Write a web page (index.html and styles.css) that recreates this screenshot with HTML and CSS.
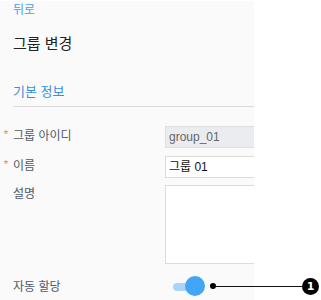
FILE: index.html
```html
<!DOCTYPE html>
<html lang="ko">
<head>
<meta charset="utf-8">
<link rel="stylesheet" href="styles.css">
</head>
<body>
<div class="panel">
  <a class="back">뒤로</a>
  <h1 class="title">그룹 변경</h1>
  <h2 class="section">기본 정보</h2>
  <div class="form">
    <div class="row">
      <label class="label req">그룹 아이디</label>
      <div class="input readonly">group_01</div>
    </div>
    <div class="row">
      <label class="label req">이름</label>
      <div class="input">그룹 01</div>
    </div>
    <div class="row row-area">
      <label class="label">설명</label>
      <div class="textarea"></div>
    </div>
    <div class="row row-switch">
      <label class="label">자동 할당</label>
      <div class="switch"><span class="track"></span><span class="thumb"></span></div>
    </div>
  </div>
</div>
<div class="callout">
  <span class="dot"></span>
  <span class="line"></span>
  <span class="badge">1</span>
</div>
</body>
</html>
```
FILE: styles.css
```css
html, body {
  margin: 0;
  padding: 0;
  background: #fff;
}
body {
  font-family: "Noto Sans CJK KR", "Liberation Sans", sans-serif;
  position: relative;
  width: 321px;
  height: 300px;
  overflow: hidden;
}
.panel {
  box-sizing: border-box;
  width: 254px;
  height: 299px;
  margin-top: 1px;
  padding-left: 13px;
  background: #fafafa;
  overflow: hidden;
}
.back {
  display: block;
  font-size: 12px;
  line-height: 16px;
  color: #4a9ff0;
}
.title {
  margin: 16px 0 0;
  font-size: 15px;
  font-weight: normal;
  line-height: 20px;
  color: #222;
}
.section {
  margin: 29px 0 0;
  padding-bottom: 6px;
  font-size: 13px;
  font-weight: normal;
  line-height: 18px;
  color: #3b8de0;
  border-bottom: 1px solid #dadada;
}
.form {
  display: flex;
  flex-direction: column;
  margin-top: 19px;
}
.row {
  display: flex;
  align-items: flex-start;
}
.row + .row {
  margin-top: 8px;
}
.row-area {
  margin-top: 7px !important;
}
.row-switch {
  margin-top: 12px !important;
  align-items: center;
}
.label {
  position: relative;
  flex: 0 0 152px;
  padding-top: 1px;
  font-size: 12px;
  line-height: 16px;
  color: #4f5868;
}
.row-area .label {
  padding-top: 0;
}
.row-switch .label {
  padding-top: 0;
}
.req::before {
  content: "*";
  position: absolute;
  left: -10px;
  top: 1px;
  color: #f0a23c;
  font-size: 13px;
}
.input {
  box-sizing: border-box;
  flex: 0 0 160px;
  height: 22px;
  padding: 0 3px;
  border: 1px solid #dcdcdc;
  background: #fff;
  font-family: "Liberation Sans", "Noto Sans CJK KR", sans-serif;
  font-size: 12px;
  line-height: 20px;
  color: #111;
}
.readonly {
  background: #eaecef;
  border-color: #dcdfe3;
  color: #666;
}
.textarea {
  box-sizing: border-box;
  flex: 0 0 160px;
  height: 79px;
  border: 1px solid #dcdcdc;
  background: #fff;
}
.switch {
  position: relative;
  margin-left: 8px;
  width: 32px;
  height: 20px;
}
.track {
  position: absolute;
  left: 0;
  top: 7px;
  width: 28px;
  height: 8px;
  border-radius: 4px;
  background: #aad5fa;
}
.thumb {
  position: absolute;
  right: 0;
  top: 0;
  width: 20px;
  height: 20px;
  border-radius: 50%;
  background: #42a5f5;
}
.callout .dot {
  position: absolute;
  left: 210px;
  top: 283px;
  width: 6px;
  height: 6px;
  border-radius: 50%;
  background: #000;
}
.callout .line {
  position: absolute;
  left: 213px;
  top: 286px;
  width: 90px;
  height: 1px;
  background: #111;
}
.callout .badge {
  position: absolute;
  left: 302px;
  top: 278px;
  width: 17px;
  height: 17px;
  border-radius: 50%;
  background: #000;
  color: #fff;
  font-family: "DejaVu Sans", sans-serif;
  font-weight: bold;
  font-size: 11px;
  line-height: 17px;
  text-align: center;
}
```
